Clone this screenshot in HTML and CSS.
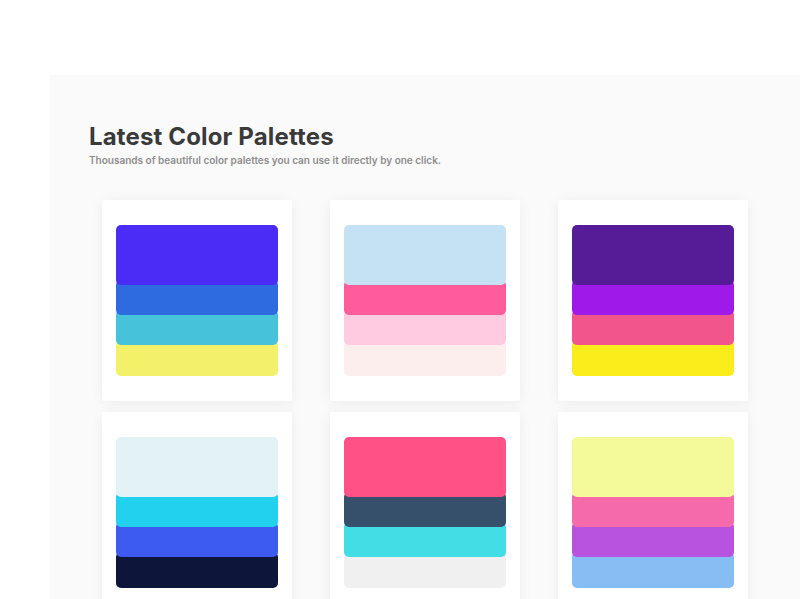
FILE: index.html
```html
<!DOCTYPE html>
<html lang="en">
<head>
  <meta charset="UTF-8" />
  <meta name="viewport" content="width=device-width, initial-scale=1.0" />
  <title>Latest Color Palettes</title>
  <link rel="stylesheet" href="styles.css">
</head>
<body>
  <div class="panel">
    <h1>Latest Color Palettes</h1>
    <p class="subtitle">Thousands of beautiful color palettes you can use it directly by one click.</p>

    <div class="grid">
      <div class="card">
        <div class="palette">
          <div class="swatch" style="background: #4a2cf6;"></div>
          <div class="swatch" style="background: #2e6ae0;"></div>
          <div class="swatch" style="background: #46c3da;"></div>
          <div class="swatch" style="background: #f3f06a;"></div>
        </div>
      </div>
      <div class="card">
        <div class="palette">
          <div class="swatch" style="background: #c5e2f4;"></div>
          <div class="swatch" style="background: #fe5c9a;"></div>
          <div class="swatch" style="background: #fecbe0;"></div>
          <div class="swatch" style="background: #fdeeee;"></div>
        </div>
      </div>
      <div class="card">
        <div class="palette">
          <div class="swatch" style="background: #561b96;"></div>
          <div class="swatch" style="background: #9e1ae8;"></div>
          <div class="swatch" style="background: #f2558c;"></div>
          <div class="swatch" style="background: #faed1b;"></div>
        </div>
      </div>
      <div class="card">
        <div class="palette">
          <div class="swatch" style="background: #e2f2f5;"></div>
          <div class="swatch" style="background: #22d1ee;"></div>
          <div class="swatch" style="background: #3d5af1;"></div>
          <div class="swatch" style="background: #0e153a;"></div>
        </div>
      </div>
      <div class="card">
        <div class="palette">
          <div class="swatch" style="background: #ff5185;"></div>
          <div class="swatch" style="background: #364f6b;"></div>
          <div class="swatch" style="background: #43dde6;"></div>
          <div class="swatch" style="background: #f0f0f0;"></div>
        </div>
      </div>
      <div class="card">
        <div class="palette">
          <div class="swatch" style="background: #f4f99a;"></div>
          <div class="swatch" style="background: #f56aaa;"></div>
          <div class="swatch" style="background: #b753df;"></div>
          <div class="swatch" style="background: #86bdf3;"></div>
        </div>
      </div>
    </div>
  </div>
</body>
</html>
```

FILE: styles.css
```css
body {
    margin: 0;
    background-color: #fff;
    font-family: Inter, "Liberation Sans", sans-serif;
    overflow: hidden;
}

.panel {
    margin: 75px 0 0 50px;
    padding: 47px 0 60px 39px;
    background-color: #fafafa;
    min-height: 600px;
}

h1 {
    margin: 0;
    font-size: 24px;
    font-weight: 700;
    color: #3a3a3a;
    letter-spacing: 0.15px;
    line-height: 30px;
}

.subtitle {
    margin: 2px 0 0;
    font-size: 10px;
    font-weight: 600;
    color: #8d8d8d;
}

.grid {
    display: grid;
    grid-template-columns: repeat(3, 190px);
    column-gap: 38px;
    row-gap: 11px;
    margin-top: 34px;
    padding-left: 13px;
}

.card {
    background-color: #fff;
    border-radius: 2px;
    box-shadow: 0 2px 14px rgba(0, 0, 0, 0.06);
    padding: 25px 14px 25px 14px;
    height: 201px;
    box-sizing: border-box;
}

.palette {
    display: flex;
    flex-direction: column;
}

.swatch {
    position: relative;
    height: 35px;
    margin-top: -5px;
    border-radius: 5px;
}

.swatch:nth-child(1) {
    height: 60px;
    margin-top: 0;
    z-index: 4;
}

.swatch:nth-child(2) { z-index: 3; }
.swatch:nth-child(3) { z-index: 2; }

.swatch:nth-child(4) {
    height: 36px;
    z-index: 1;
}
```
